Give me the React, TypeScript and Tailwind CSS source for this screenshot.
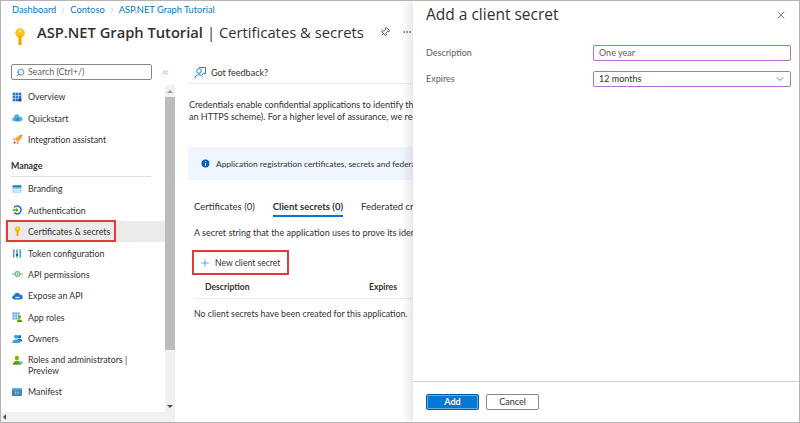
import { ChevronDown, ChevronRight, ChevronsLeft, Info, MoreHorizontal, Pin, Plus, Search, X } from "lucide-react";
import type { ReactNode } from "react";

const TITLE = "font-['Open_Sans',sans-serif]";

function KeyIcon({ size = 14 }: { size?: number }) {
  return (
    <svg width={size} height={size * 1.5} viewBox="0 0 14 21" className="shrink-0">
      <circle cx="7" cy="6" r="5.6" fill="#fcc419" />
      <rect x="5.2" y="9" width="3.6" height="10" fill="#f0a800" />
      <rect x="5.2" y="17" width="3.6" height="3" rx="1" fill="#f0a800" />
      <circle cx="7" cy="3.8" r="1.4" fill="#fff3bf" />
    </svg>
  );
}

const ic = {
  overview: (
    <svg width="10" height="10" viewBox="0 0 14 14">
      <rect x="1" y="1" width="12" height="12" fill="#1f6fc4" />
      <path d="M1 5h12M1 9h12M5 1v12M9 1v12" stroke="#cfe4f7" strokeWidth="1" />
      <rect x="9" y="9" width="4" height="4" fill="#0b4a8f" />
    </svg>
  ),
  quickstart: (
    <svg width="11" height="8" viewBox="0 0 16 12">
      <path d="M3 11a3 3 0 0 1 0-6 4 4 0 0 1 8-1 3.500 3.500 0 0 1 2 7z" fill="#59b4d9" />
      <path d="M5 4l2 3 2-3 2 3v4H5z" fill="#2c8fc4" />
    </svg>
  ),
  rocket: (
    <svg width="11" height="11" viewBox="0 0 14 14">
      <path d="M13 1c-4 0-7 2-9 6l3 3c4-2 6-5 6-9z" fill="#f2a33a" />
      <path d="M11 1.500l1.500 1.500L13 1z" fill="#2b88d8" />
      <path d="M4 7l-3 1 2-3zM7 10l-1 3 3-2z" fill="#e2601d" />
      <path d="M3 9l2 2-3 2z" fill="#d83b01" />
    </svg>
  ),
  branding: (
    <svg width="10" height="8" viewBox="0 0 14 12">
      <rect x="0.500" y="0.500" width="13" height="11" fill="#7fd3f7" />
      <rect x="0.500" y="0.500" width="13" height="3" fill="#1f7fc4" />
      <rect x="2" y="6" width="10" height="1.500" fill="#fff" />
      <rect x="2" y="8.500" width="10" height="1.500" fill="#fff" />
    </svg>
  ),
  auth: (
    <svg width="10" height="10" viewBox="0 0 14 14">
      <path d="M3 3.500a5.500 5.500 0 1 1 0 7" fill="none" stroke="#1f6fc4" strokeWidth="2" />
      <path d="M1 6h5V4l3 3-3 3V8H1z" fill="#57a300" />
    </svg>
  ),
  token: (
    <svg width="10" height="11" viewBox="0 0 14 14">
      <path d="M2.500 1v12M7 1v12M11.500 1v12" stroke="#1f7fc4" strokeWidth="1.600" />
      <rect x="1" y="3" width="3" height="2" fill="#59b4d9" />
      <rect x="5.500" y="8" width="3" height="2" fill="#333" />
      <rect x="10" y="4" width="3" height="2" fill="#59b4d9" />
    </svg>
  ),
  api: (
    <svg width="11" height="8" viewBox="0 0 14 10">
      <path d="M0 5h14" stroke="#7fba00" strokeWidth="1.200" />
      <circle cx="7" cy="5" r="3" fill="#fff" stroke="#59b4d9" strokeWidth="1.500" />
      <circle cx="7" cy="5" r="1.200" fill="#7fba00" />
    </svg>
  ),
  cloud: (
    <svg width="11" height="8" viewBox="0 0 16 11">
      <path d="M3.500 10.500a3 3 0 0 1-.5-6 4.500 4.500 0 0 1 8.500-1 3.500 3.500 0 0 1 1 7z" fill="#1f78c8" />
      <path d="M5 7.500h6" stroke="#fff" strokeWidth="1.500" />
    </svg>
  ),
  appRoles: (
    <svg width="11" height="10" viewBox="0 0 15 14">
      <rect x="0.500" y="0.500" width="10" height="10" fill="#5ea0ef" />
      <path d="M0 4h11M0 7.500h11M4 0v11M7.500 0v11" stroke="#fff" strokeWidth="0.800" />
      <circle cx="10.500" cy="7" r="2.300" fill="#7fba00" />
      <path d="M6.500 14a4 3.500 0 0 1 8 0z" fill="#5e9e0a" />
    </svg>
  ),
  owners: (
    <svg width="11" height="9" viewBox="0 0 16 13">
      <circle cx="11" cy="4" r="2.500" fill="#1f6fc4" />
      <path d="M7 11a4 4 0 0 1 8 0z" fill="#1f6fc4" />
      <circle cx="6" cy="4" r="3" fill="#3aa0e0" />
      <path d="M0.500 13a5.500 5 0 0 1 11 0z" fill="#3aa0e0" />
    </svg>
  ),
  roles: (
    <svg width="11" height="10" viewBox="0 0 16 14">
      <circle cx="7" cy="4" r="3.200" fill="#7fba00" />
      <path d="M1 14a6 6 0 0 1 12 0z" fill="#5e9e0a" />
      <circle cx="13" cy="11" r="2.500" fill="#59c4e8" />
    </svg>
  ),
  manifest: (
    <svg width="10" height="8" viewBox="0 0 15 12">
      <rect width="15" height="12" fill="#3a87b8" />
      <rect y="0" width="15" height="2.500" fill="#6fb2d8" />
      <path d="M5.500 5v4M9 5v4" stroke="#cfe4f7" strokeWidth="1.200" />
    </svg>
  ),
};

function NavRow({ icon, label, active, tall }: { icon: ReactNode; label: ReactNode; active?: boolean; tall?: boolean }) {
  return (
    <div className={`flex ml-[4px] pl-[6px] ${tall ? "py-[5px] items-start" : "h-[21.4px] items-center"} ${active ? "bg-[#edebe9]" : ""}`}>
      <span className={`w-[12px] flex justify-center shrink-0 ${tall ? "mt-[1px]" : ""}`}>{icon}</span>
      <span className="ml-[5px] text-[8.8px] leading-[11px] text-[#323130] whitespace-nowrap">{label}</span>
    </div>
  );
}

function Scrollbar() {
  return (
    <div className="w-[10px] shrink-0 bg-[#f1f1f1] flex flex-col items-center">
      <div className="h-[12px] shrink-0 flex items-center justify-center">
        <div className="w-0 h-0 border-x-[3px] border-x-transparent border-b-[3px] border-b-[#a0a0a0]" />
      </div>
      <div className="w-full h-[253px] bg-[#bcbcbc]" />
      <div className="flex-1" />
      <div className="h-[12px] shrink-0 flex items-center justify-center">
        <div className="w-0 h-0 border-x-[3px] border-x-transparent border-t-[3px] border-t-[#505050]" />
      </div>
    </div>
  );
}

function NavColumn() {
  return (
    <div className="w-[174px] shrink-0 flex flex-col">
      <div className="pl-[10px] flex items-center gap-[9px] mt-[19px] h-[16px] shrink-0">
        <div className="w-[141px] h-[16px] shrink-0 rounded-[2px] border border-[#8a8886] flex items-center pl-[4px] gap-[3px] bg-white">
          <Search size={9} className="text-[#0078d4] -scale-x-100" />
          <span className="text-[8.9px] text-[#605e5c]">Search (Ctrl+/)</span>
        </div>
        <ChevronsLeft size={9} className="text-[#8a8886]" />
      </div>
      <div className="flex-1 min-h-0 flex mt-[5px]">
        <div className="w-[164px] shrink-0 pt-[1px]">
          <NavRow icon={ic.overview} label="Overview" />
          <NavRow icon={ic.quickstart} label="Quickstart" />
          <NavRow icon={ic.rocket} label="Integration assistant" />
          <div className="ml-[10px] mr-[14px] mt-[10px] pb-[5px] border-b border-[#e1dfdd] text-[8.8px] leading-[11px] font-bold text-[#323130]">Manage</div>
          <div className="mt-[1px]">
            <NavRow icon={ic.branding} label="Branding" />
            <NavRow icon={ic.auth} label="Authentication" />
            <div className="relative">
              <NavRow icon={<KeyIcon size={7} />} label="Certificates & secrets" active />
              <div className="absolute left-[5px] -top-[1px] bottom-0 w-[110px] border-2 border-[#e03c3c]" />
            </div>
            <NavRow icon={ic.token} label="Token configuration" />
            <NavRow icon={ic.api} label="API permissions" />
            <NavRow icon={ic.cloud} label="Expose an API" />
            <NavRow icon={ic.appRoles} label="App roles" />
            <NavRow icon={ic.owners} label="Owners" />
            <NavRow
              tall
              icon={ic.roles}
              label={
                <>
                  Roles and administrators |<br />Preview
                </>
              }
            />
            <NavRow icon={ic.manifest} label="Manifest" />
          </div>
        </div>
        <Scrollbar />
      </div>
      <div className="h-[10px] shrink-0 bg-[#f1f1f1] flex items-center pl-[2px]">
        <div className="w-0 h-0 border-y-[3px] border-y-transparent border-r-[3px] border-r-[#505050]" />
      </div>
    </div>
  );
}

function MainColumn() {
  return (
    <div className="flex-1 min-w-0 overflow-hidden pl-[13px] text-[9px] leading-[12px] text-[#323130] whitespace-nowrap">
      <div className="h-[22px] mt-[17px] border-b border-[#edebe9] flex items-center pl-[6px] gap-[5px]">
        <svg width="12" height="12" viewBox="0 0 12 12" fill="none" stroke="#0078d4" strokeWidth="0.900" className="shrink-0">
          <circle cx="5" cy="4" r="2.300" />
          <path d="M1 11.500c0-2.500 2-3.800 4-3.800s3 .8 3.500 2M5 .5h6.500v6H9.500L8 8" />
        </svg>
        <span>Got feedback?</span>
      </div>
      <div className="mt-[15px] pl-[1px] leading-[11.5px]">
        <div>Credentials enable confidential applications to identify themselves to the authentication service</div>
        <div>an HTTPS scheme). For a higher level of assurance, we recommend using a certificate</div>
      </div>
      <div className="mt-[25px] h-[33px] bg-[#f0f6ff] flex items-center pl-[12px] gap-[5px]">
        <Info size={11} fill="#0f5fb5" stroke="#fff" strokeWidth={2} className="shrink-0" />
        <span className="text-[8.4px]">Application registration certificates, secrets and federated credentials can be found</span>
      </div>
      <div className="mt-[17px] flex pl-[6px] gap-[18px] text-[9.5px]">
        <div className="h-[20px] pt-[4px]">Certificates (0)</div>
        <div className="h-[20px] pt-[4px] font-bold border-b-2 border-[#0078d4]">Client secrets (0)</div>
        <div className="h-[20px] pt-[4px]">Federated credentials</div>
      </div>
      <div className="mt-[10px] pl-[6px]">A secret string that the application uses to prove its identity when requesting a token</div>
      <div className="mt-[11px] ml-[4px] w-[97px] h-[25px] border-2 border-[#e03c3c] flex items-center pl-[5px] gap-[4px]">
        <Plus size={12} strokeWidth={1.2} className="text-[#0078d4] shrink-0" />
        <span className="text-[8.6px]">New client secret</span>
      </div>
      <div className="ml-[6px] h-[24px] flex items-center border-b border-[#edebe9] font-bold pl-[11px] text-[8.6px]">
        <span className="w-[164px]">Description</span>
        <span>Expires</span>
      </div>
      <div className="mt-[9px] pl-[6px] text-[8.8px]">No client secrets have been created for this application.</div>
    </div>
  );
}

function SecretPanel() {
  return (
    <div className="flex-1 min-w-0 flex flex-col bg-white shadow-[-5px_0_8px_rgba(0,0,0,0.10)] relative">
      <div className="flex items-center justify-between pl-[13px] pr-[12px] h-[28px]">
        <span className={`${TITLE} text-[15.5px] text-[#323130]`}>Add a client secret</span>
        <X size={12} strokeWidth={1.2} className="text-[#323130]" />
      </div>
      <div className="flex items-center h-[16px] mt-[16px] pl-[13px] pr-[8px]">
        <span className="w-[167px] text-[9px] text-[#605e5c]">Description</span>
        <div className="flex-1 h-[16px] border-[1.5px] border-[#b56fd0] rounded-[2px] flex items-center pl-[5px] text-[9px] text-[#605e5c]">One year</div>
      </div>
      <div className="flex items-center h-[16px] mt-[10px] pl-[13px] pr-[8px]">
        <span className="w-[167px] text-[9px] text-[#605e5c]">Expires</span>
        <div className="flex-1 h-[16px] border-[1.5px] border-[#b56fd0] rounded-[2px] flex items-center justify-between pl-[5px] pr-[4px] text-[9px] text-[#323130]">
          <span>12 months</span>
          <ChevronDown size={12} strokeWidth={1.2} />
        </div>
      </div>
      <div className="flex-1" />
      <div className="h-[41px] border-t border-[#d2d0ce] pl-[13px] flex items-center gap-[7px]">
        <div className="w-[53px] h-[16px] bg-[#0078d4] border border-[#005a9e] rounded-[2px] outline outline-1 -outline-offset-2 outline-white/40 flex items-center justify-center text-[9px] font-bold text-white">Add</div>
        <div className="w-[53px] h-[16px] border border-[#8a8886] rounded-[2px] flex items-center justify-center text-[9px] text-[#323130]">Cancel</div>
      </div>
    </div>
  );
}

export default function App() {
  return (
    <div className="font-['Lato','Open_Sans',sans-serif] w-[800px] h-[423px] overflow-hidden bg-white border border-[#b4b4b4] flex">
      <div className="w-[412px] shrink-0 flex flex-col overflow-hidden">
        <div className="pl-[11px] h-[18px] shrink-0 flex items-center gap-[2px] text-[9.3px] text-[#0078d4]">
          <span>Dashboard</span>
          <ChevronRight size={10} strokeWidth={1} className="text-[#8a8886]" />
          <span>Contoso</span>
          <ChevronRight size={10} strokeWidth={1} className="text-[#8a8886]" />
          <span>ASP.NET Graph Tutorial</span>
        </div>
        <div className="h-[26px] shrink-0 pl-[13px] flex items-center">
          <span className="mt-[10px] shrink-0">
            <KeyIcon size={12} />
          </span>
          <span className={`${TITLE} ml-[11px] text-[14.7px] font-semibold text-[#323130] whitespace-nowrap`}>ASP.NET Graph Tutorial</span>
          <span className={`${TITLE} ml-[4px] text-[14.8px] text-[#323130] whitespace-nowrap`}>| Certificates &amp; secrets</span>
          <Pin size={10} className="ml-[16px] rotate-45 text-[#323130] shrink-0" />
          <MoreHorizontal size={10} className="ml-[12px] text-[#605e5c] shrink-0" />
        </div>
        <div className="flex-1 flex min-h-0">
          <NavColumn />
          <MainColumn />
        </div>
      </div>
      <SecretPanel />
    </div>
  );
}
